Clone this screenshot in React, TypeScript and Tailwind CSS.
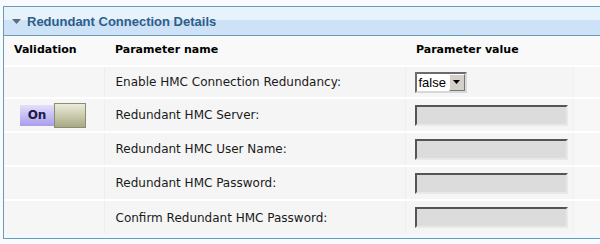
const rows = [
  { label: "Enable HMC Connection Redundancy:", kind: "select" },
  { label: "Redundant HMC Server:", kind: "input" },
  { label: "Redundant HMC User Name:", kind: "input" },
  { label: "Redundant HMC Password:", kind: "input" },
  { label: "Confirm Redundant HMC Password:", kind: "input" },
];

function Toggle() {
  return (
    <div className="flex items-center">
      <div className="flex h-[21px] w-[34px] items-center justify-center bg-gradient-to-b from-[#e4e0fa] to-[#a99cec] text-[12px] font-bold text-[#1a1a4a]">
        On
      </div>
      <div className="h-[25px] w-[32px] border border-[#8c8c70] bg-gradient-to-b from-[#ececdc] to-[#a9a985]" />
    </div>
  );
}

function SelectBox() {
  return (
    <div className="flex h-[21px] w-[52px] items-center border-2 border-t-[#6b6b6b] border-l-[#6b6b6b] border-r-[#d8d8d8] border-b-[#d8d8d8] bg-white">
      <span className="flex-1 pl-[2px] font-['Liberation_Sans',sans-serif] text-[13px] leading-none text-black">false</span>
      <div className="flex h-[17px] w-[16px] items-center justify-center border border-t-white border-l-white border-r-[#777] border-b-[#777] bg-[#d4d0c8]">
        <svg width="7" height="4" viewBox="0 0 7 4"><path d="M0 0h7L3.5 4z" fill="#000" /></svg>
      </div>
    </div>
  );
}

function TextBox() {
  return (
    <div className="h-[21px] w-[153px] border-2 border-t-[#555] border-l-[#555] border-r-[#e8e8e8] border-b-[#e8e8e8] bg-[#dcdcdc]" />
  );
}

export default function App() {
  return (
    <div className="h-[244px] w-[600px] overflow-hidden bg-[#f8fbfd] pl-[3px] pt-[6px] font-['DejaVu_Sans',Verdana,sans-serif]">
      <div className="w-[620px] border border-[#6a9cb8] bg-[#eef5fa]">
        <div className="flex h-[29px] flex-col border-b border-[#6a9cb8]">
          <div className="h-[13px] bg-[#e7f3fb]" />
          <div className="flex-1 bg-[#cde2f7]" />
        </div>
        <div className="-mt-[29px] flex h-[29px] items-center pl-[8px]">
          <svg width="9" height="5" viewBox="0 0 9 5" className="mr-[6px]"><path d="M0 0h9L4.5 5z" fill="#5b6b7c" /></svg>
          <span className="font-['Liberation_Sans',Arial,sans-serif] text-[13px] font-bold text-[#2f5d8a]">Redundant Connection Details</span>
        </div>
        <table className="w-full border-collapse text-[12px] text-[#1a1a1a]">
          <thead>
            <tr className="h-[30px] bg-[#f9f9f9] text-left text-[11px] font-bold text-black">
              <th className="w-[100px] pl-[10px] font-bold">Validation</th>
              <th className="w-[301px] pl-[11px] font-bold">Parameter name</th>
              <th className="w-[168px] pl-[11px] font-bold">Parameter value</th>
              <th />
            </tr>
          </thead>
          <tbody>
            {rows.map((r, i) => (
              <tr key={r.label} className={i === 0 ? "h-[32px]" : "h-[34px]"}>
                <td className="border-t-2 border-r border-t-white border-r-[#eeeeee] bg-[#f6f6f6] pl-[16px]">
                  {i === 1 && <Toggle />}
                </td>
                <td className="border-t-2 border-t-white bg-[#f5f5f5] pl-[11px]">{r.label}</td>
                <td className="border-t-2 border-l border-r border-t-white border-l-[#eeeeee] border-r-[#f0f0f0] bg-[#f5f5f5] pl-[9px]">
                  {r.kind === "select" ? <SelectBox /> : <TextBox />}
                </td>
                <td className="border-t-2 border-t-white bg-[#f7f7f7]" />
              </tr>
            ))}
          </tbody>
        </table>
        <div className="h-[4px] bg-[#f3f8fc]" />
      </div>
    </div>
  );
}
